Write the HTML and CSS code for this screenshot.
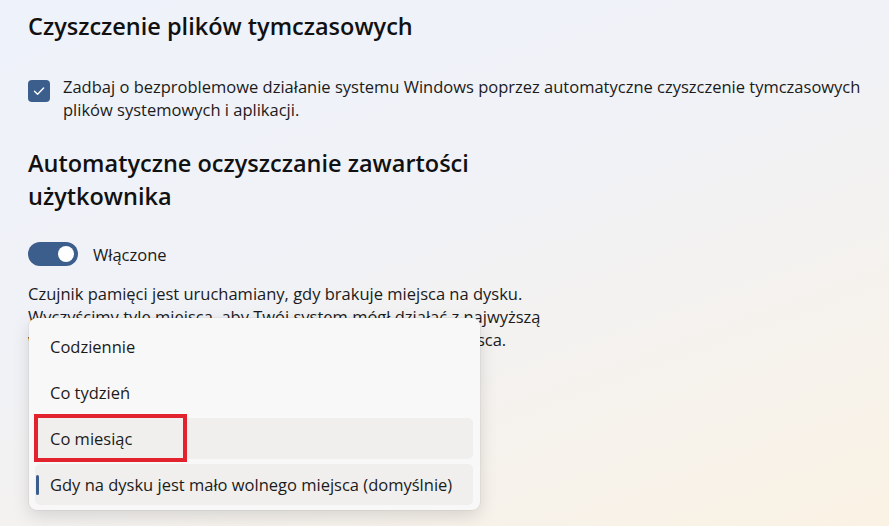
FILE: index.html
```html
<!DOCTYPE html>
<html lang="pl">
<head>
<meta charset="utf-8">
<title>Czujnik pamięci</title>
<link rel="stylesheet" href="styles.css">
</head>
<body>
<main class="page">
  <h1 class="title">Czyszczenie plików tymczasowych</h1>
  <label class="check-row">
    <span class="checkbox">
      <svg viewBox="0 0 22 22" width="22" height="22"><path d="M6.5 11.2 L9.6 14.2 L15.6 8" fill="none" stroke="#fff" stroke-width="1.4" stroke-linecap="round" stroke-linejoin="round"/></svg>
    </span>
    <span class="check-text">Zadbaj o bezproblemowe działanie systemu Windows poprzez automatyczne czyszczenie tymczasowych plików systemowych i aplikacji.</span>
  </label>
  <h2 class="title title-wrap">Automatyczne oczyszczanie zawartości użytkownika</h2>
  <div class="toggle-row">
    <span class="toggle"><span class="knob"></span></span>
    <span class="toggle-label">Włączone</span>
  </div>
  <div class="desc-area">
    <p class="desc">Czujnik pamięci jest uruchamiany, gdy brakuje miejsca na dysku. Wyczyścimy tyle miejsca, aby Twój system mógł działać z najwyższą wydajnością. Zrobimy to jedynie wtedy, gdy zabraknie miejsca.</p>
    <ul class="menu">
      <li class="item">Codziennie</li>
      <li class="item">Co tydzień</li>
      <li class="item hover">Co miesiąc</li>
      <li class="item selected">Gdy na dysku jest mało wolnego miejsca (domyślnie)</li>
    </ul>
    <div class="highlight"></div>
  </div>
</main>
</body>
</html>
```
FILE: styles.css
```css
html, body {
  margin: 0;
  height: 100%;
}
body {
  width: 889px;
  height: 526px;
  overflow: hidden;
  background: linear-gradient(160deg, #eef2fa 0%, #f0f2f7 40%, #f5f2ee 70%, #faf2e4 100%);
  font-family: "Open Sans", "Noto Sans", sans-serif;
  color: #1b1b1b;
}
.page {
  padding: 10px 0 0 28px;
}
.title {
  margin: 0;
  font-size: 23.5px;
  font-weight: 600;
  line-height: 33px;
  color: #111;
}
.title-wrap {
  width: 480px;
  margin-top: 26px;
}
.check-row {
  display: flex;
  gap: 13px;
  margin-top: 32px;
  align-items: flex-start;
}
.checkbox {
  flex: none;
  width: 22px;
  height: 22px;
  border-radius: 4px;
  background: #3b5e8d;
  margin-top: 5px;
  display: flex;
}
.check-text {
  font-size: 16.5px;
  line-height: 23px;
  width: 810px;
}
.toggle-row {
  display: flex;
  align-items: center;
  gap: 15px;
  margin-top: 29px;
}
.toggle {
  width: 50px;
  height: 24px;
  border-radius: 12px;
  background: #3b5e8d;
  display: flex;
  align-items: center;
  justify-content: flex-end;
  padding-right: 4px;
  box-sizing: border-box;
}
.knob {
  width: 16px;
  height: 16px;
  border-radius: 50%;
  background: #fff;
}
.toggle-label {
  font-size: 16.5px;
}
.desc-area {
  position: relative;
  margin-top: 16px;
}
.desc {
  margin: 0;
  width: 530px;
  font-size: 16.5px;
  line-height: 23px;
}
.menu {
  position: absolute;
  left: 1px;
  top: 36px;
  width: 451px;
  margin: 0;
  padding: 8px 7px 5px 6px;
  box-sizing: border-box;
  list-style: none;
  background: #f9f8f8;
  border-radius: 8px;
  box-shadow: 0 6px 18px rgba(0, 0, 0, 0.13), 0 0 0 1px rgba(0, 0, 0, 0.04);
  display: flex;
  flex-direction: column;
  gap: 5px;
}
.item {
  position: relative;
  height: 41px;
  display: flex;
  align-items: center;
  padding-left: 15px;
  border-radius: 5px;
  font-size: 16.5px;
  color: #1b1b1b;
}
.item.hover,
.item.selected {
  background: #f0efee;
}
.item.selected::before {
  content: "";
  position: absolute;
  left: 1px;
  top: 11px;
  width: 3px;
  height: 20px;
  border-radius: 2px;
  background: #3b5e8d;
}
.highlight {
  position: absolute;
  left: 6px;
  top: 132px;
  width: 153px;
  height: 48px;
  box-sizing: border-box;
  border: 4px solid #e2222c;
}
```
